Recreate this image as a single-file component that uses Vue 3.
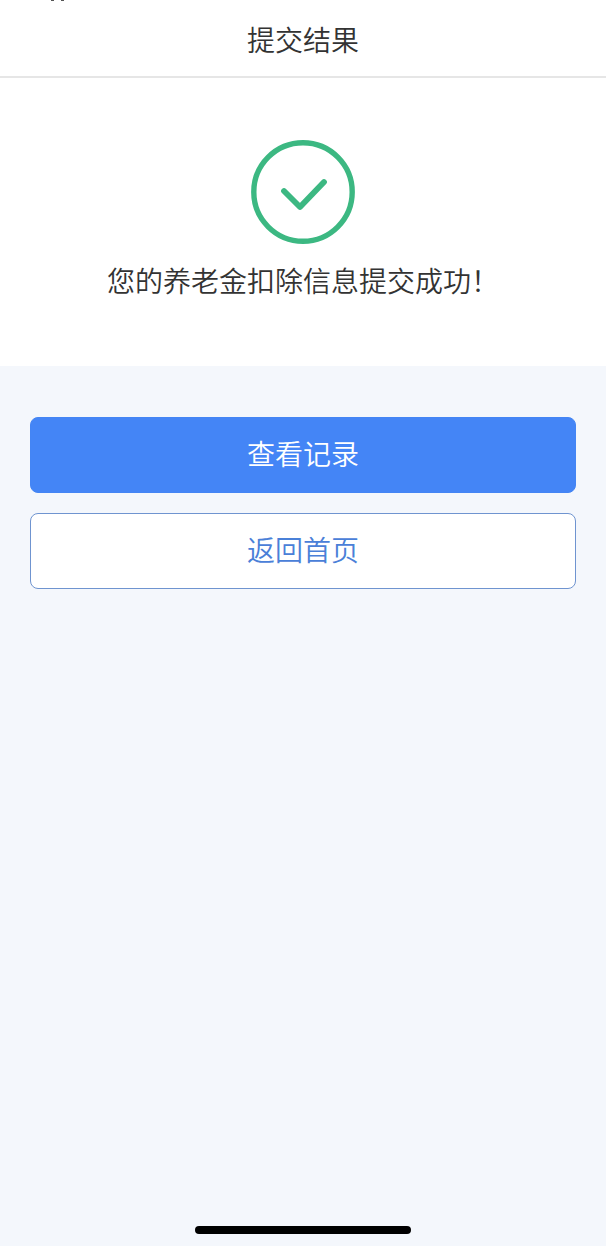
<script setup>
const title = '提交结果'
const message = '您的养老金扣除信息提交成功！'
</script>

<template>
  <div class="page">
    <svg class="status-trace" width="14" height="1" viewBox="0 0 14 1" aria-hidden="true">
      <path d="M1 0h3v1H1zM11 0h3v1h-3z" fill="#555" />
    </svg>
    <header class="header">
      <h1 class="title">{{ title }}</h1>
    </header>
    <main class="main">
      <section class="result">
        <svg class="icon" width="104" height="104" viewBox="0 0 104 104" fill="none" stroke="#3cb882" aria-hidden="true">
          <circle cx="52" cy="52" r="49.2" stroke-width="5.4" />
          <path d="M33 51L49 67L73 42" stroke-width="5.8" stroke-linecap="round" stroke-linejoin="round" />
        </svg>
        <p class="message">{{ message }}</p>
      </section>
      <div class="actions">
        <button type="button" class="button primary">查看记录</button>
        <button type="button" class="button secondary">返回首页</button>
      </div>
    </main>
    <footer class="footer">
      <div class="home-indicator"></div>
    </footer>
  </div>
</template>

<style>
body {
  margin: 0;
  background: #f4f7fc;
}
</style>

<style scoped>
.page {
  position: relative;
  display: flex;
  flex-direction: column;
  min-height: 100vh;
  background: #f4f7fc;
  color: #333;
  font-family: "Liberation Sans", "Noto Sans CJK SC", sans-serif;
  font-size: 28px;
  font-weight: 350;
  line-height: 40px;
}

.status-trace {
  position: absolute;
  top: 0;
  left: 50px;
}

.header {
  padding: 22px 0 14px;
  border-bottom: 2px solid #e6e6e6;
  background: #fff;
  text-align: center;
}

.title {
  margin: 0;
  font-size: 28px;
  font-weight: inherit;
}

.main {
  flex: 1;
}

.result {
  display: flex;
  flex-direction: column;
  align-items: center;
  gap: 19px;
  padding: 62px 16px 63px;
  background: #fff;
}

.icon {
  display: block;
}

.message {
  margin: 0;
  text-align: center;
}

.actions {
  display: flex;
  flex-direction: column;
  gap: 20px;
  padding: 51px 30px;
}

.button {
  box-sizing: border-box;
  width: 100%;
  padding: 18px 16px 16px;
  border: 1px solid #4485f4;
  border-radius: 8px;
  font: inherit;
  cursor: pointer;
}

.primary {
  background: #4485f6;
  color: #fff;
}

.secondary {
  border-color: #6f94d0;
  background: #fff;
  color: #4a80d8;
}

.footer {
  display: flex;
  justify-content: center;
  padding: 12px;
}

.home-indicator {
  width: 216px;
  height: 8px;
  border-radius: 4px;
  background: #000;
}
</style>
